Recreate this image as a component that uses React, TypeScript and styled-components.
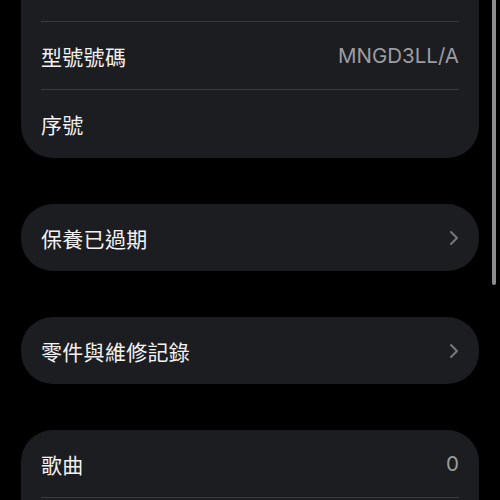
import React from "react";
import styled, { createGlobalStyle } from "styled-components";

const GlobalStyle = createGlobalStyle`
  html, body {
    margin: 0;
    padding: 0;
    background: #000;
    overflow: hidden;
  }
  body {
    font-family: Inter, "Noto Sans CJK TC", sans-serif;
  }
`;

interface RowData {
  label: string;
  value?: string;
  chevron?: boolean;
}

interface Group {
  continued?: boolean;
  rows: RowData[];
}

const groups: Group[] = [
  {
    continued: true,
    rows: [{ label: "型號號碼", value: "MNGD3LL/A" }, { label: "序號" }],
  },
  { rows: [{ label: "保養已過期", chevron: true }] },
  { rows: [{ label: "零件與維修記錄", chevron: true }] },
  {
    rows: [
      { label: "歌曲", value: "0" },
      { label: "影片", value: "0" },
    ],
  },
];

function Chevron() {
  return (
    <svg width="10" height="16" viewBox="0 0 10 16" fill="none">
      <path
        d="M2 2l6 6-6 6"
        stroke="#76777c"
        strokeWidth="2"
        strokeLinecap="round"
        strokeLinejoin="round"
      />
    </svg>
  );
}

export default function App() {
  return (
    <Screen>
      <GlobalStyle />
      <List>
        {groups.map((group, gi) => (
          <Card key={gi} $continued={!!group.continued}>
            {group.rows.map((row, ri) => (
              <Row key={row.label} $divider={ri > 0 || !!group.continued}>
                <Label>{row.label}</Label>
                {row.value && <Value>{row.value}</Value>}
                {row.chevron && <Chevron />}
              </Row>
            ))}
          </Card>
        ))}
      </List>
      <ScrollBar />
    </Screen>
  );
}

const Screen = styled.div`
  position: relative;
  width: 500px;
  height: 500px;
  overflow: hidden;
  background: #000;
`;

const List = styled.div`
  display: flex;
  flex-direction: column;
  gap: 46px;
  width: 458px;
  margin-left: 21px;
`;

const Card = styled.div<{ $continued: boolean }>`
  display: flex;
  flex-direction: column;
  background: #1c1d20;
  border-radius: ${(p) => (p.$continued ? "0 0 32px 32px" : "32px")};
  padding-top: ${(p) => (p.$continued ? "21px" : "0")};
  padding-bottom: ${(p) => (p.$continued ? "1px" : "0")};
  overflow: hidden;
`;

const Row = styled.div<{ $divider: boolean }>`
  display: flex;
  align-items: center;
  justify-content: space-between;
  height: 67px;
  border-top: ${(p) => (p.$divider ? "1px solid #3a3b3e" : "none")};
  margin: 0 20px;
`;

const Label = styled.span`
  font-family: "Noto Sans CJK TC", sans-serif;
  font-size: 21px;
  color: #f2f2f4;
  letter-spacing: 0.3px;
`;

const Value = styled.span`
  font-family: Inter, "Noto Sans", sans-serif;
  font-size: 20.5px;
  color: #9c9ca1;
`;

const ScrollBar = styled.div`
  position: absolute;
  top: 0;
  right: 4px;
  width: 4px;
  height: 285px;
  background: #8c8c8e;
  border-radius: 0 0 2px 2px;
`;
